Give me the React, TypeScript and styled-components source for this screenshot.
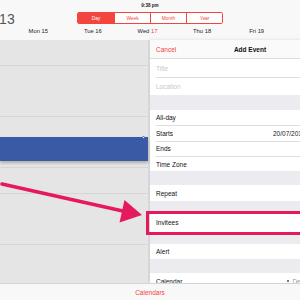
import React from "react";
import styled, { createGlobalStyle } from "styled-components";

const Global = createGlobalStyle`
  html, body { margin: 0; padding: 0; background: #fff; }
  body { font-family: "Liberation Sans", Arial, sans-serif; }
  * { box-sizing: border-box; }
`;

const RED = "#f2453d";
const PINK = "#e6195d";

const Screen = styled.div`
  position: relative;
  width: 300px;
  height: 300px;
  overflow: hidden;
  display: flex;
  flex-direction: column;
  background: #e5e5e5;
`;

const TopBar = styled.header`
  height: 40px;
  background: #f8f8f8;
  display: flex;
  flex-direction: column;
  flex-shrink: 0;
`;

const Status = styled.div`
  height: 9px;
  display: flex;
  align-items: center;
  justify-content: center;
  font-size: 4.6px;
  font-weight: bold;
  color: #222;
  padding-top: 1px;
`;

const TitleRow = styled.div`
  height: 14px;
  display: grid;
  grid-template-columns: 77px 146px 1fr;
  align-items: center;
`;

const YearText = styled.div`
  font-size: 14px;
  color: #555;
  letter-spacing: 0.3px;
  line-height: 14px;
  margin-left: -1px;
  margin-top: 3px;
`;

const Segmented = styled.div`
  display: grid;
  grid-template-columns: repeat(4, 1fr);
  height: 12px;
  margin-top: 1px;
  border: 1px solid ${RED};
  border-radius: 2px;
  overflow: hidden;
`;

const Segment = styled.div<{ $active?: boolean }>`
  display: flex;
  align-items: center;
  justify-content: center;
  font-size: 4.8px;
  color: ${(p) => (p.$active ? "#fff" : RED)};
  background: ${(p) => (p.$active ? RED : "#fff")};
  & + & { border-left: 1px solid ${RED}; }
`;

const DaysRow = styled.div`
  flex: 1;
  display: grid;
  grid-template-columns: 11px repeat(6, 54.6px);
  align-items: center;
  padding-bottom: 1px;
`;

const DayLabel = styled.div`
  display: flex;
  justify-content: center;
  font-size: 5.8px;
  color: #222;
  white-space: nowrap;
`;

const RedNum = styled.span`
  color: ${RED};
`;

const Body = styled.main`
  flex: 1;
  display: flex;
  min-height: 0;
  position: relative;
`;

const CalendarGrid = styled.section`
  position: relative;
  width: 149px;
  flex-shrink: 0;
  background-color: #e5e5e5;
  background-image: repeating-linear-gradient(
    to bottom,
    transparent 0px,
    transparent 25px,
    #d6d6d6 25px,
    #d6d6d6 25.6px
  );
  border-right: 1px solid #d9d9d9;
`;

const EventBar = styled.div`
  position: absolute;
  left: 0;
  top: 97px;
  width: 148px;
  height: 24px;
  background: #3a5aa6;
  box-shadow: 0 2px 3px rgba(0, 0, 0, 0.25);
`;

const Handle = styled.div`
  position: absolute;
  right: 3px;
  top: -1.5px;
  width: 3px;
  height: 3px;
  border-radius: 50%;
  border: 0.7px solid #3a5aa6;
  background: #fff;
`;

const Popover = styled.section`
  width: 200px;
  flex-shrink: 0;
  margin-left: 1px;
  background: #ebebf0;
  display: flex;
  flex-direction: column;
  box-shadow: -1px 0 3px rgba(0, 0, 0, 0.12);
  overflow: hidden;
`;

const PopHeader = styled.div`
  height: 19px;
  background: #fafafa;
  border-bottom: 1px solid #dcdcdc;
  display: grid;
  grid-template-columns: 1fr auto 1fr;
  align-items: center;
  padding: 0 6px;
  flex-shrink: 0;
`;

const CancelBtn = styled.div`
  font-size: 6.5px;
  color: ${RED};
`;

const HeaderTitle = styled.div`
  font-size: 6.5px;
  font-weight: bold;
  color: #111;
`;

const Group = styled.div`
  background: #fff;
  flex-shrink: 0;
`;

const Spacer = styled.div<{ $h: number }>`
  height: ${(p) => p.$h}px;
  flex-shrink: 0;
`;

const Row = styled.div<{ $h: number }>`
  height: ${(p) => p.$h}px;
  display: grid;
  grid-template-columns: 117px 1fr;
  align-items: center;
  margin-left: 6px;
  font-size: 6.5px;
  color: #111;
  & + & { border-top: 0.6px solid #dedede; }
`;

const Placeholder = styled.span`
  color: #c8c8cd;
`;

const Value = styled.span<{ $indent?: number }>`
  color: #222;
  margin-left: ${(p) => p.$indent ?? 0}px;
  display: flex;
  align-items: center;
  gap: 3px;
  white-space: nowrap;
`;

const Dot = styled.span`
  width: 2.4px;
  height: 2.4px;
  border-radius: 50%;
  background: #3a4a7a;
`;

const Faint = styled.span`
  color: #9a9aa0;
`;

const BottomBar = styled.footer`
  height: 17px;
  flex-shrink: 0;
  background: #f8f8f8;
  border-top: 1px solid #d4d4d4;
  display: flex;
  align-items: center;
  justify-content: center;
  font-size: 6.5px;
  color: ${RED};
  position: relative;
  z-index: 2;
`;

const Highlight = styled.div`
  position: absolute;
  left: 146px;
  top: 211px;
  width: 170px;
  height: 24px;
  border: 3px solid ${PINK};
  pointer-events: none;
`;

const ArrowSvg = styled.svg`
  position: absolute;
  left: 0;
  top: 0;
  pointer-events: none;
`;

export default function App() {
  const days: [string, string][] = [
    ["Mon", "15"],
    ["Tue", "16"],
    ["Wed", "17"],
    ["Thu", "18"],
    ["Fri", "19"],
    ["Sat", "20"],
  ];
  return (
    <>
      <Global />
      <Screen>
        <TopBar>
          <Status>9:38 pm</Status>
          <TitleRow>
            <YearText>13</YearText>
            <Segmented>
              <Segment $active>Day</Segment>
              <Segment>Week</Segment>
              <Segment>Month</Segment>
              <Segment>Year</Segment>
            </Segmented>
            <div />
          </TitleRow>
          <DaysRow>
            <div />
            {days.map(([d, n]) => (
              <DayLabel key={d}>
                {d}&nbsp;{n === "17" ? <RedNum>{n}</RedNum> : n}
              </DayLabel>
            ))}
          </DaysRow>
        </TopBar>
        <Body>
          <CalendarGrid>
            <EventBar>
              <Handle />
            </EventBar>
          </CalendarGrid>
          <Popover>
            <PopHeader>
              <CancelBtn>Cancel</CancelBtn>
              <HeaderTitle>Add Event</HeaderTitle>
              <div />
            </PopHeader>
            <Group>
              <Row $h={18}><Placeholder>Title</Placeholder></Row>
              <Row $h={18}><Placeholder>Location</Placeholder></Row>
            </Group>
            <Spacer $h={15} />
            <Group>
              <Row $h={15.3}>All-day</Row>
              <Row $h={15.3}>
                Starts<Value>20/07/2013 21:00</Value>
              </Row>
              <Row $h={15.3}>Ends</Row>
              <Row $h={15.3}>Time Zone</Row>
            </Group>
            <Spacer $h={14} />
            <Group>
              <Row $h={16}>Repeat</Row>
            </Group>
            <Spacer $h={11} />
            <Group>
              <Row $h={21}>Invitees</Row>
            </Group>
            <Spacer $h={11} />
            <Group>
              <Row $h={15}>Alert</Row>
            </Group>
            <Spacer $h={14} />
            <Group>
              <Row $h={16}>
                Calendar
                <Value $indent={14}>
                  <Dot />
                  <Faint>Default</Faint>
                </Value>
              </Row>
            </Group>
          </Popover>
        </Body>
        <BottomBar>Calendars</BottomBar>
        <Highlight />
        <ArrowSvg width="300" height="300" viewBox="0 0 300 300">
          <line x1="2" y1="184" x2="125" y2="211.5" stroke={PINK} strokeWidth="3.5" strokeLinecap="round" />
          <polygon points="124.5,200 119.5,222.5 142,215" fill={PINK} />
        </ArrowSvg>
      </Screen>
    </>
  );
}
